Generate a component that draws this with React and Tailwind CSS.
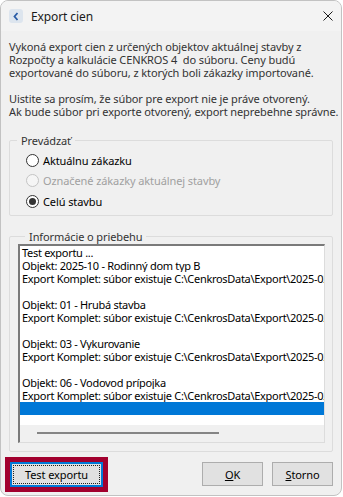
import React from "react";

const font = { fontFamily: '"Noto Sans", "Open Sans", sans-serif', letterSpacing: "-0.1px" };

function Radio({ label, checked, disabled }) {
  return (
    <div className="flex items-center h-[20.5px] pl-[16px]">
      <span
        className={
          "w-[13px] h-[13px] rounded-full border flex items-center justify-center shrink-0 " +
          (disabled ? "border-[#c4c4c4] bg-[#f5f5f5]" : "border-[#333333] bg-white")
        }
      >
        {checked && <span className="w-[7px] h-[7px] rounded-full bg-[#333333]" />}
      </span>
      <span className={"ml-[4px] " + (disabled ? "text-[#a0a0a0]" : "text-[#000000]")}>{label}</span>
    </div>
  );
}

function GroupBox({ title, className, children }) {
  return (
    <fieldset className={"min-w-0 border border-[#dcdcdc] rounded-[2px] " + className}>
      <legend className="ml-[7px] px-[4px] text-[#333333] leading-[13px]">{title}</legend>
      {children}
    </fieldset>
  );
}

const log = [
  "Test exportu ...",
  "Objekt: 2025-10 - Rodinný dom typ B",
  "Export Komplet: súbor existuje C:\\CenkrosData\\Export\\2025-02-14_Komplet.xml",
  "",
  "Objekt: 01 - Hrubá stavba",
  "Export Komplet: súbor existuje C:\\CenkrosData\\Export\\2025-02-14_Komplet.xml",
  "",
  "Objekt: 03 - Vykurovanie",
  "Export Komplet: súbor existuje C:\\CenkrosData\\Export\\2025-02-14_Komplet.xml",
  "",
  "Objekt: 06 - Vodovod prípojka",
  "Export Komplet: súbor existuje C:\\CenkrosData\\Export\\2025-02-14_Komplet.xml",
];

export default function App() {
  return (
    <div className="w-[343px] h-[497px] bg-white text-[11px] leading-[13px] text-black" style={font}>
      <div className="w-[342px] h-[496px] rounded-[8px] border border-[#c2c2c2] bg-[#f0f0f0] overflow-hidden flex flex-col">
        {/* title bar */}
        <div className="h-[30px] bg-[#f3f3f3] flex items-center pl-[8px] pr-[8px] shrink-0">
          <div className="w-[14px] h-[14px] rounded-[3px] bg-[#dde5ee] flex items-center justify-center">
            <svg width="8" height="9" viewBox="0 0 8 9">
              <path d="M5.5 1 L2.5 4.5 L5.5 8" fill="none" stroke="#2a5ca6" strokeWidth="1.8" />
            </svg>
          </div>
          <span className="ml-[8px] text-[12px] text-[#1a1a1a]">Export cien</span>
          <div className="ml-auto w-[10px] h-[10px]">
            <svg width="10" height="10" viewBox="0 0 10 10">
              <path d="M0.5 0.5 L9.5 9.5 M9.5 0.5 L0.5 9.5" stroke="#1a1a1a" strokeWidth="1" />
            </svg>
          </div>
        </div>

        <div className="flex-1 flex flex-col px-[8px] pt-[9px] min-w-0">
          <p className="text-[#333333] whitespace-nowrap">
            Vykoná export cien z určených objektov aktuálnej stavby z<br />
            Rozpočty a kalkulácie CENKROS 4&nbsp; do súboru. Ceny budú<br />
            exportované do súboru, z ktorých boli zákazky importované.
          </p>
          <p className="mt-[13px] text-[#333333] whitespace-nowrap">
            Uistite sa prosím, že súbor pre export nie je práve otvorený.<br />
            Ak bude súbor pri exporte otvorený, export neprebehne správne.
          </p>

          <GroupBox title="Prevádzať" className="mt-[16px] pb-[3px] pt-[3px]">
            <Radio label="Aktuálnu zákazku" />
            <Radio label="Označené zákazky aktuálnej stavby" disabled />
            <Radio label="Celú stavbu" checked />
          </GroupBox>

          <GroupBox title="Informácie o priebehu" className="mt-[14px] pl-[8px] pr-[7px] pb-[8px] pt-[1px]">
            <div className="h-[199px] bg-white border-t-2 border-l-2 border-t-[#7a7a7a] border-l-[#7a7a7a] border-r border-b border-r-[#dcdcdc] border-b-[#dcdcdc] flex flex-col overflow-hidden">
              <div className="flex-1 overflow-hidden tracking-[-0.3px]">
                {log.map((line, i) => (
                  <div key={i} className="h-[13px] pl-[2px] whitespace-nowrap overflow-hidden text-black">
                    {line}
                  </div>
                ))}
                <div className="h-[13px] bg-[#0078d7]" />
              </div>
              <div className="h-[17px] bg-[#f0f0f0] flex items-center shrink-0">
                <div className="ml-[17px] w-[182px] h-[2px] bg-[#858585]" />
              </div>
            </div>
          </GroupBox>

          <div className="flex items-center mt-[5px]">
            <div className="ml-[-4px] border-[5px] border-[#a2002e]">
              <button className="w-[93px] h-[25px] bg-[#e1e1e1] border-2 border-[#0078d7] flex items-center justify-center">
                <span className="w-[87px] h-[19px] border border-dotted border-[#222222] flex items-center justify-center text-[#000000]">
                  Test exportu
                </span>
              </button>
            </div>
            <button className="ml-auto w-[61px] h-[24px] bg-[#e1e1e1] border border-[#adadad] text-black">
              <span className="underline">O</span>K
            </button>
            <button className="ml-[9px] w-[61px] h-[24px] bg-[#e1e1e1] border border-[#adadad] text-black">
              <span className="underline">S</span>torno
            </button>
          </div>
        </div>
      </div>
    </div>
  );
}
